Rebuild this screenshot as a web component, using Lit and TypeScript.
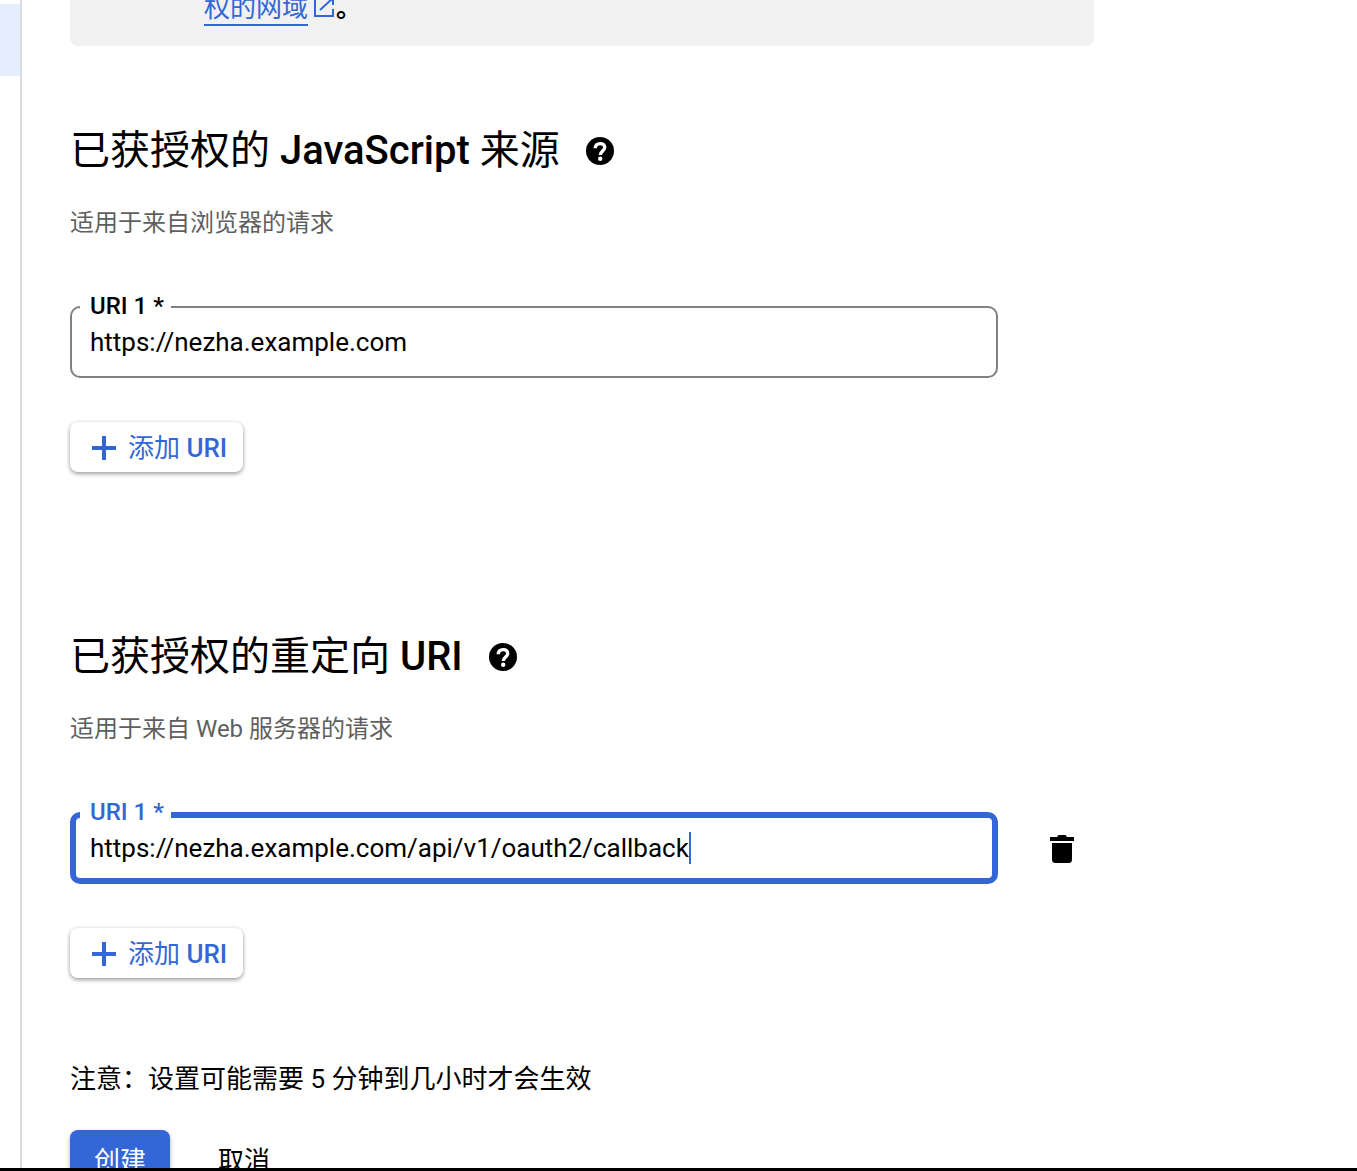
import { LitElement, html, css, svg, nothing } from "lit";
import { customElement, property } from "lit/decorators.js";

const plusIcon = html`<svg class="plus" viewBox="0 0 24 24" aria-hidden="true">
  ${svg`<path d="M10 0h4v10h10v4H14v10h-4V14H0v-4h10z" fill="currentColor"/>`}
</svg>`;

const helpIcon = html`<svg class="help-icon" viewBox="0 0 28 28" aria-hidden="true">
  ${svg`<circle cx="14" cy="14" r="14" fill="#000"/>
    <path d="M9.300 11.300C9.300 8.200 11.200 6.600 14 6.600s4.700 1.500 4.700 4c0 3.300-4.400 3.500-4.400 7.400" fill="none" stroke="#fff" stroke-width="3.400"/>
    <circle cx="14.200" cy="21.800" r="2.200" fill="#fff"/>`}
</svg>`;

const trashIcon = html`<svg class="trash" viewBox="0 0 24 28" aria-hidden="true">
  ${svg`<path d="M0 2h7l1.500-2h7L17 2h7v4H0z"/><path d="M2 8h20v16.500a3.500 3.500 0 0 1-3.500 3.500h-13A3.500 3.500 0 0 1 2 24.500z"/>`}
</svg>`;

const externalIcon = html`<svg class="external" viewBox="0 0 20 20" aria-hidden="true">
  ${svg`<path d="M8 0H1v18h18v-7M12 0h7v7M19 0L6 12" fill="none" stroke="currentColor" stroke-width="2"/>`}
</svg>`;

@customElement("uri-section")
export class UriSection extends LitElement {
  @property() name = "";
  @property() heading = "";
  @property() latin = "";
  @property() tail = "";
  @property() hint = "";
  @property() value = "";
  @property({ type: Boolean }) active = false;

  static styles = css`
    :host {
      display: block;
    }
    .title-row {
      display: flex;
      align-items: center;
      gap: 26px;
    }
    .title {
      margin: 0;
      font-size: 40px;
      line-height: 48px;
      font-weight: 400;
    }
    .latin {
      font-weight: 500;
    }
    button {
      font: inherit;
      border: 0;
      background: none;
      padding: 0;
      cursor: pointer;
    }
    .help-icon {
      display: block;
      width: 28px;
      height: 28px;
    }
    .hint {
      margin: 32px 0 67px;
      font-size: 24px;
      line-height: 32px;
      color: #5f5f5f;
    }
    .row {
      display: grid;
      grid-template-columns: minmax(0, 1fr) 96px;
      align-items: center;
    }
    .field {
      position: relative;
      display: flex;
      align-items: center;
      box-sizing: border-box;
      height: 72px;
      padding: 0 18px;
      border: 2px solid #808080;
      border-radius: 10px;
    }
    .label {
      position: absolute;
      left: 8px;
      top: -16px;
      padding: 0 7px 0 10px;
      background: #fff;
      font-size: 24px;
      line-height: 28px;
      font-weight: 500;
    }
    .input {
      flex: 1;
      min-width: 0;
      padding: 0;
      border: 0;
      outline: 0;
      background: none;
      color: #000;
      font: inherit;
      font-size: 26px;
      line-height: 32px;
    }
    .active {
      padding: 0 14px;
      border: 6px solid #3367d6;
    }
    .active .label {
      left: 4px;
      top: -20px;
      color: #3367d6;
    }
    .active .input {
      flex: 0 1 auto;
      field-sizing: content;
    }
    .caret {
      width: 2px;
      height: 32px;
      background: #3367d6;
    }
    .remove {
      justify-self: center;
      margin-left: 32px;
      padding: 14px 12px 12px;
    }
    .trash {
      display: block;
      width: 24px;
      height: 28px;
    }
    .add {
      display: flex;
      align-items: center;
      gap: 12px;
      height: 50px;
      margin-top: 44px;
      padding: 2px 16px 0 22px;
      border-radius: 8px;
      background: #fff;
      box-shadow: 0 2px 4px rgba(0, 0, 0, 0.35), 0 0 4px rgba(0, 0, 0, 0.08);
      color: #3367d6;
      font-size: 26px;
      line-height: 32px;
    }
    .plus {
      width: 24px;
      height: 24px;
    }
  `;

  render() {
    return html`
      <div class="title-row">
        <h2 class="title">${this.heading}<span class="latin"> ${this.latin}</span>${this.tail ? html` ${this.tail}` : nothing}</h2>
        <button class="help" type="button" aria-label="帮助">${helpIcon}</button>
      </div>
      <p class="hint">${this.hint}</p>
      <div class="row">
        <div class="field ${this.active ? "active" : ""}">
          <label class="label" for=${this.name}>URI 1 *</label>
          <input class="input" id=${this.name} type="text" required spellcheck="false" .value=${this.value} />
          ${this.active ? html`<span class="caret"></span>` : nothing}
        </div>
        ${this.active ? html`<button class="remove" type="button" aria-label="删除">${trashIcon}</button>` : nothing}
      </div>
      <button class="add" type="button">${plusIcon}<span>添加 <span class="latin">URI</span></span></button>
    `;
  }
}

@customElement("app-root")
export class AppRoot extends LitElement {
  static styles = css`
    :host {
      display: grid;
      grid-template-columns: 20px minmax(0, 1fr);
      box-sizing: border-box;
      height: 100vh;
      overflow: hidden;
      border-bottom: 3px solid #000;
      background: #fff;
      color: #000;
      font-family: Roboto, "Noto Sans CJK SC", sans-serif;
      font-size: 26px;
      line-height: 40px;
    }
    .side {
      padding-top: 4px;
    }
    .current {
      height: 72px;
      background: #e4eeff;
    }
    .main {
      min-height: 0;
      overflow: hidden;
      border-left: 2px solid #dadce0;
      padding: 0 48px;
    }
    .content {
      max-width: 1024px;
    }
    .notice {
      display: flex;
      margin: -12px 0 81px;
      padding: 0 0 18px 134px;
      border-radius: 8px;
      background: #f1f1f1;
    }
    .link {
      display: flex;
      align-items: center;
      gap: 6px;
      height: 40px;
      color: #3367d6;
      text-decoration: none;
    }
    .link-text {
      align-self: flex-start;
      box-sizing: border-box;
      height: 38px;
      border-bottom: 2px solid #3367d6;
    }
    .external {
      width: 20px;
      height: 20px;
    }
    .stop {
      margin-left: 2px;
      font-weight: 700;
    }
    .second {
      margin-top: 161px;
    }
    .note {
      margin: 81px 0 31px;
    }
    .actions {
      display: flex;
      gap: 24px;
    }
    .action {
      height: 62px;
      padding: 0 24px;
      border: 0;
      border-radius: 8px;
      background: none;
      color: #000;
      font: inherit;
      cursor: pointer;
    }
    .primary {
      background: #3367d6;
      color: #fff;
      box-shadow: 0 2px 4px rgba(0, 0, 0, 0.35);
    }
  `;

  render() {
    return html`
      <nav class="side"><div class="current"></div></nav>
      <main class="main">
        <div class="content">
          <div class="notice">
            <a class="link" href="#"><span class="link-text">权的网域</span>${externalIcon}</a><span class="stop">。</span>
          </div>
          <uri-section
            name="origin"
            heading="已获授权的"
            latin="JavaScript"
            tail="来源"
            hint="适用于来自浏览器的请求"
            value="https://nezha.example.com"
          ></uri-section>
          <uri-section
            class="second"
            name="redirect"
            heading="已获授权的重定向"
            latin="URI"
            hint="适用于来自 Web 服务器的请求"
            value="https://nezha.example.com/api/v1/oauth2/callback"
            active
          ></uri-section>
          <p class="note">注意：设置可能需要 5 分钟到几小时才会生效</p>
          <div class="actions">
            <button class="action primary" type="button">创建</button>
            <button class="action" type="button">取消</button>
          </div>
        </div>
      </main>
    `;
  }
}
